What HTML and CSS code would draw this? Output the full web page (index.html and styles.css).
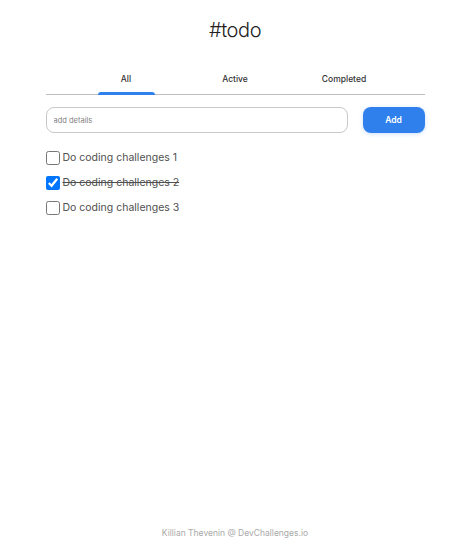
FILE: index.html
```html
<!DOCTYPE html>
<html lang="en">
<head>
<meta charset="utf-8">
<title>#todo</title>
<link rel="stylesheet" href="styles.css">
</head>
<body>
<div class="page">
  <main class="app">
    <h1 class="title">#todo</h1>
    <nav class="tabs">
      <div class="tab tab-active">All</div>
      <div class="tab">Active</div>
      <div class="tab">Completed</div>
    </nav>
    <form class="add-form">
      <input class="add-input" type="text" placeholder="add details">
      <button class="add-btn" type="button">Add</button>
    </form>
    <ul class="todo-list">
      <li class="todo"><input class="todo-check" type="checkbox"><span class="todo-text">Do coding challenges 1</span></li>
      <li class="todo"><input class="todo-check" type="checkbox" checked><span class="todo-text todo-done">Do coding challenges 2</span></li>
      <li class="todo"><input class="todo-check" type="checkbox"><span class="todo-text">Do coding challenges 3</span></li>
    </ul>
  </main>
  <footer class="footer">Killian Thevenin @ DevChallenges.io</footer>
</div>
</body>
</html>
```

FILE: styles.css
```css
* { box-sizing: border-box; }
html, body { margin: 0; padding: 0; background: #fff; }
body {
  font-family: Inter, "Open Sans", "DejaVu Sans", sans-serif;
  color: #333;
}
.page {
  min-height: 100vh;
  display: flex;
  flex-direction: column;
}
.app {
  width: 379px;
  margin: 0 auto;
}
.title {
  margin: 18px 0 0;
  text-align: center;
  font-size: 20px;
  line-height: 24px;
  font-weight: 300;
  color: #222;
  letter-spacing: -0.4px;
}
.tabs {
  margin-top: 27px;
  display: flex;
  justify-content: center;
  gap: 52px;
  border-bottom: 1px solid #bdbdbd;
}
.tab {
  position: relative;
  width: 57px;
  text-align: center;
  font-size: 8.5px;
  font-weight: 500;
  line-height: 14px;
  padding: 3px 0 8px;
  color: #333;
}
.tab-active::after {
  content: "";
  position: absolute;
  left: 0;
  right: 0;
  bottom: -1px;
  height: 3px;
  background: #2f80ed;
  border-radius: 4px 4px 0 0;
}
.add-form {
  margin-top: 12px;
  display: flex;
  align-items: center;
  gap: 15px;
}
.add-input {
  flex: 1;
  height: 26px;
  border: 1px solid #c8c8c8;
  border-radius: 8px;
  padding: 0 7px;
  font-family: inherit;
  font-size: 7.5px;
  color: #333;
  outline: none;
}
.add-input::placeholder { color: #828282; }
.add-btn {
  width: 62px;
  height: 26px;
  border: none;
  border-radius: 8px;
  background: #2f80ed;
  color: #fff;
  font-family: inherit;
  font-size: 8.5px;
  font-weight: 600;
  box-shadow: 0 1px 4px rgba(127, 177, 243, 0.4);
}
.todo-list {
  list-style: none;
  margin: 12px 0 0;
  padding: 0;
}
.todo {
  display: flex;
  align-items: center;
  height: 25px;
  gap: 3px;
}
.todo-check {
  width: 14px;
  height: 14px;
  margin: 0;
}
.todo-text {
  font-size: 10.5px;
  color: #4f4f4f;
}
.todo-done { text-decoration: line-through; }
.footer {
  margin-top: auto;
  padding-bottom: 11px;
  text-align: center;
  font-size: 8.5px;
  line-height: 12px;
  color: #a9a9a9;
}
```
